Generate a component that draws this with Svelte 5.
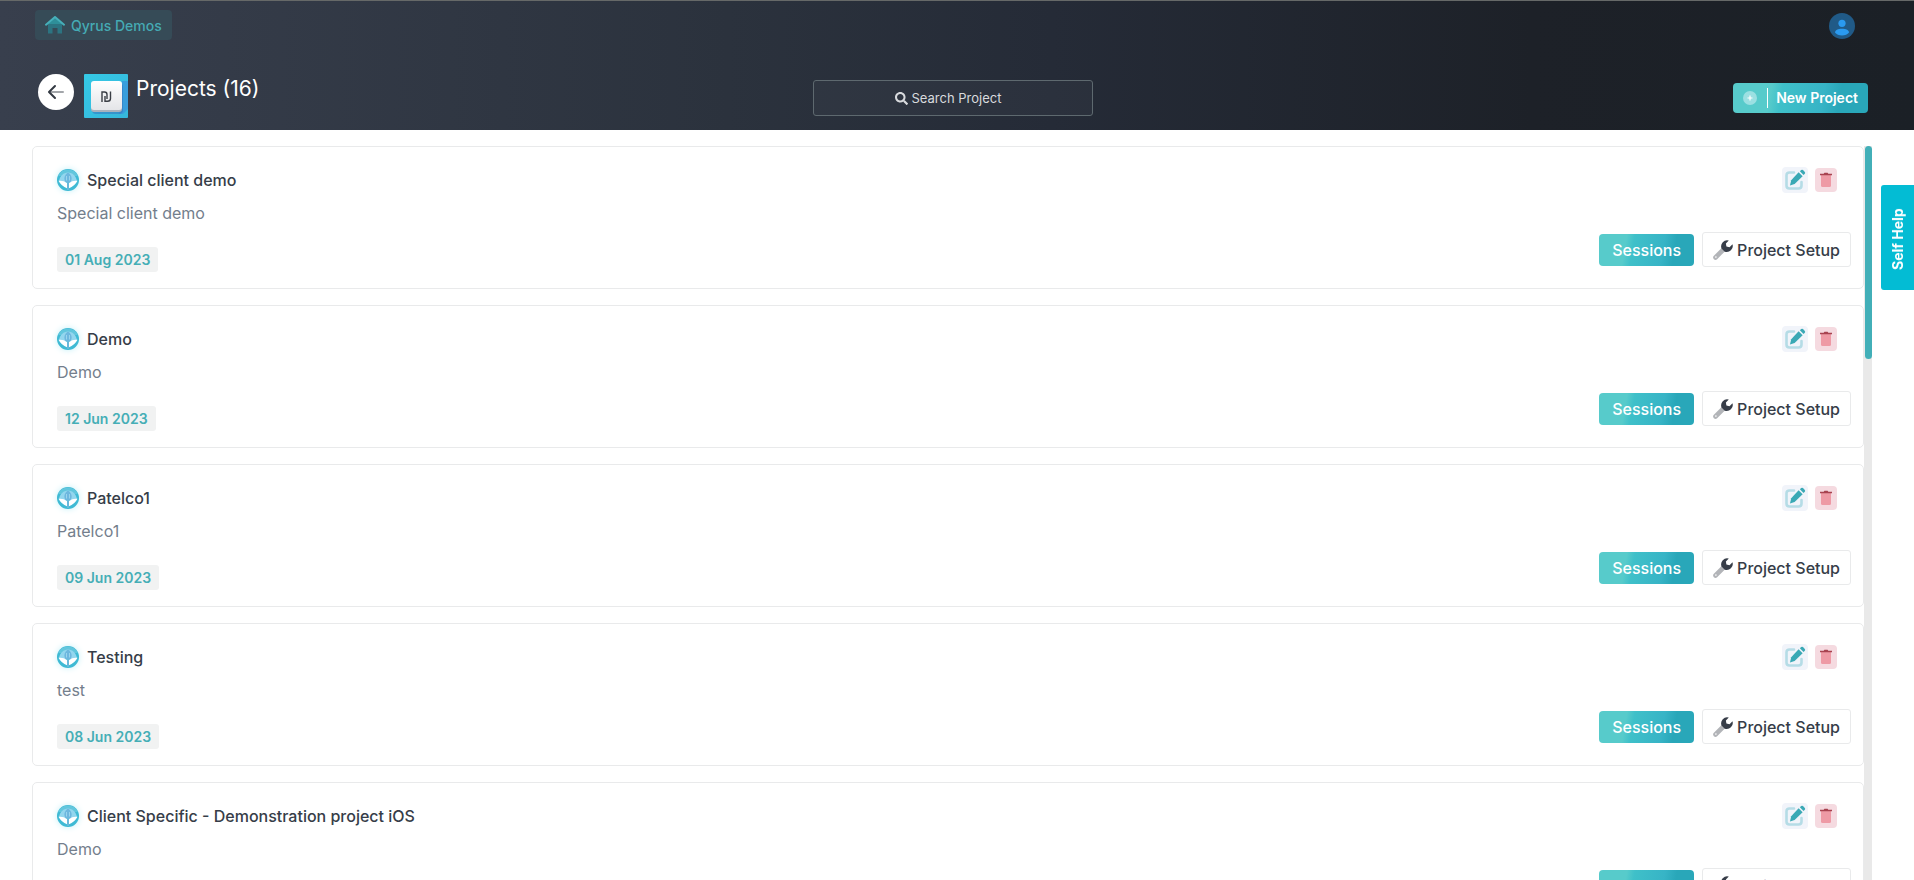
<script>
  const total = 16;
  const visibleShare = 29;
  const projects = [
    { name: 'Special client demo', description: 'Special client demo', date: '01 Aug 2023' },
    { name: 'Demo', description: 'Demo', date: '12 Jun 2023' },
    { name: 'Patelco1', description: 'Patelco1', date: '09 Jun 2023' },
    { name: 'Testing', description: 'test', date: '08 Jun 2023' },
    { name: 'Client Specific - Demonstration project iOS', description: 'Demo', date: '' }
  ];
</script>

<div class="page">
  <header>
    <div class="topbar">
      <a class="crumb" href="#home">
        <svg width="20" height="18" viewBox="0 0 20 18" aria-hidden="true">
          <path d="M3 8v9.500h4.500v-5.500h5v5.500h4.500v-9.500l-7-5.500z" fill="#2c7481" />
          <path d="M10 1.500L2.800 8h14.400z" fill="#2e8f99" />
          <path d="M1 8.700L10 1l9 7.700" fill="none" stroke="#46b0ba" stroke-width="2" stroke-linejoin="round" stroke-linecap="round" />
        </svg>
        Qyrus Demos
      </a>
      <button class="avatar" aria-label="Account">
        <svg width="26" height="26" viewBox="0 0 26 26" aria-hidden="true">
          <circle cx="13" cy="13" r="13" fill="#205a87" />
          <circle cx="13" cy="10.300" r="3.600" fill="#2a9af0" />
          <path d="M6 19.500c0-2.200 3-3.700 7-3.700s7 1.500 7 3.700c-1.500 2-4 3-7 3s-5.500-1-7-3z" fill="#2a9af0" />
        </svg>
      </button>
    </div>

    <div class="toolbar">
      <div class="heading">
        <button class="back" aria-label="Back">
          <svg width="18" height="16" viewBox="0 0 18 16" aria-hidden="true">
            <path d="M3 8h13" stroke="#a3a6aa" stroke-width="2" stroke-linecap="round" />
            <path d="M8 2L2 8l6 6" fill="none" stroke="#343a43" stroke-width="2" stroke-linecap="round" stroke-linejoin="round" />
          </svg>
        </button>
        <svg class="logo" width="44" height="44" viewBox="0 0 44 44" aria-hidden="true">
          <defs>
            <linearGradient id="tile" x1="0" y1="0" x2="1" y2="1">
              <stop offset="0" stop-color="#35c9e6" />
              <stop offset="1" stop-color="#36b6da" />
            </linearGradient>
            <linearGradient id="key" x1="0" y1="0" x2="0" y2="1">
              <stop offset="0" stop-color="#ffffff" />
              <stop offset="1" stop-color="#e4e5e8" />
            </linearGradient>
          </defs>
          <rect width="44" height="44" rx="1" fill="url(#tile)" />
          <path d="M38 7h6v28l-5 5h-4z" fill="#3a92dc" opacity=".7" />
          <rect x="8" y="9" width="31" height="31" rx="4" fill="#3474bd" opacity=".55" />
          <rect x="7" y="8" width="31" height="30" rx="3" fill="#a8b2bd" />
          <rect x="7" y="7" width="31" height="29" rx="3" fill="url(#key)" />
          <path d="M18 28V18h2.500q2.500 0 2.500 2.500V25M21 22v5.300h2.500q3 0 3-2.800V17.500" fill="none" stroke="#3a3e45" stroke-width="1.400" />
        </svg>
        <h1>Projects ({total})</h1>
      </div>

      <button class="search">
        <svg width="13" height="13" viewBox="0 0 512 512" aria-hidden="true">
          <path fill="#d8dadd" d="M505 442.700L405.300 343c-4.500-4.500-10.600-7-17-7H372c27.600-35.300 44-79.700 44-128C416 93.100 322.900 0 208 0S0 93.100 0 208s93.100 208 208 208c48.300 0 92.700-16.400 128-44v16.300c0 6.400 2.500 12.500 7 17l99.700 99.700c9.400 9.400 24.600 9.400 33.900 0l28.300-28.300c9.400-9.400 9.400-24.600.1-34zM208 336c-70.700 0-128-57.200-128-128 0-70.700 57.200-128 128-128 70.700 0 128 57.200 128 128 0 70.700-57.200 128-128 128z" />
        </svg>
        Search Project
      </button>

      <button class="new">
        <svg width="14" height="14" viewBox="0 0 14 14" aria-hidden="true">
          <circle cx="7" cy="7" r="7" fill="#9be0e2" />
          <path d="M7 4.500v5M4.500 7h5" stroke="#fff" stroke-width="1.200" />
        </svg>
        <span class="divider"></span>
        New Project
      </button>
    </div>
  </header>

  <main>
    <ul>
      {#each projects as project}
        <li>
          <div class="info">
            <h2>
              <svg class="badge" width="22" height="22" viewBox="0 0 22 22" aria-hidden="true">
                <circle cx="11" cy="11" r="11" fill="#3fbad4" />
                <path d="M1 7A11 11 0 0 1 21 7z" fill="#62c6dd" />
                <path d="M2 12C3 7 6.500 3.500 11 3.500S19 7 20 12q-5 2-9 1-4 1-9-1z" fill="#93d6ee" />
                <path d="M11 3.500c-4 2.500-4.500 7-2.500 9.500h5c2-2.500 1.500-7-2.500-9.500z" fill="#6db7de" />
                <path d="M9.500 7v4.500M12.500 7v4.500" stroke="#a5dcf1" stroke-width=".8" />
                <path d="M1.500 11.800Q6 11 10 14v5.200Q4.500 17.500 1.500 11.800zM20.500 11.800Q16 11 12 14v5.200Q17.500 17.500 20.500 11.800z" fill="#fff" />
                <path d="M11 13v8" stroke="#74b8dc" stroke-width="1.600" />
              </svg>
              {project.name}
            </h2>
            <p>{project.description}</p>
            {#if project.date}
              <time>{project.date}</time>
            {/if}
          </div>

          <div class="side">
            <div class="tools">
              <button class="edit" aria-label="Edit {project.name}">
                <svg width="22" height="22" viewBox="0 0 22 22" aria-hidden="true">
                  <path d="M10 3.500H5.500Q2.500 3.500 2.500 6.500V16.500Q2.500 19.500 5.500 19.500H14.500Q17.500 19.500 17.500 16.500V13" fill="none" stroke="#b5dce6" stroke-width="2.600" stroke-linecap="round" />
                  <path d="M14.600 3.200L18.600 7.200 10.600 15 6 16.400 7.200 11.300z" fill="#3aa9b5" />
                  <path d="M15.900 2.300L17.200 1Q18.100.3 19 1.100L20.800 2.900Q21.600 3.800 20.800 4.700L19.500 6z" fill="#3aa9b5" />
                </svg>
              </button>
              <button class="delete" aria-label="Delete {project.name}">
                <svg width="12" height="16" viewBox="0 0 12 16" aria-hidden="true">
                  <path d="M1 3h10v10.500q0 1.500-1.500 1.500h-7Q1 15 1 13.500z" fill="#ee9aa5" />
                  <path d="M0 1.700h3.700L4.400.7h3.200l.7 1H12v1.600H0z" fill="#a84350" />
                </svg>
              </button>
            </div>
            <div class="actions">
              <button class="sessions">Sessions</button>
              <button class="setup">
                <svg width="20" height="20" viewBox="0 0 20 20" aria-hidden="true">
                  <path d="M11.500 8.500L2.500 17.500" stroke="#b2b4b8" stroke-width="4.600" stroke-linecap="round" />
                  <circle cx="2.900" cy="17.100" r=".8" fill="#fff" />
                  <path d="M15.800.6A6 6 0 0 0 8.500 8.400L11.800 11.700A6 6 0 0 0 19.500 4.300L16.500 7.200 13.400 6.600 12.900 3.500z" fill="#373d48" />
                </svg>
                Project Setup
              </button>
            </div>
          </div>
        </li>
      {/each}
    </ul>
    <div class="track"><div class="thumb" style="height: {visibleShare}%"></div></div>
  </main>

  <button class="help">Self Help</button>
</div>

<style>
  :global(body) {
    background: #fff;
  }

  .page {
    height: 100vh;
    display: flex;
    flex-direction: column;
    overflow: hidden;
    font-family: Inter, 'Liberation Sans', sans-serif;
    font-size: 16px;
    line-height: 20px;
    color: #363d48;
  }

  .page :global(*) {
    box-sizing: border-box;
  }

  button {
    font: inherit;
    color: inherit;
    border: 0;
    padding: 0;
    background: none;
    cursor: pointer;
    display: flex;
    align-items: center;
    justify-content: center;
    white-space: nowrap;
  }

  svg {
    display: block;
    flex: none;
  }

  header {
    border-top: 1px solid #666968;
    padding: 9px 46px 12px 35px;
    background: linear-gradient(90deg, #383f4d, #2b323d 38%, #252b37 55%, #1d2128 80%, #1b2026);
  }

  .topbar {
    display: flex;
    justify-content: space-between;
    padding-right: 13px;
    margin-bottom: 34px;
  }

  .avatar {
    padding-top: 2px;
  }

  .crumb {
    height: 30px;
    display: flex;
    align-items: center;
    gap: 6px;
    padding: 2px 10px 0;
    border-radius: 4px;
    background: #364b57;
    color: #45aab4;
    font-size: 14px;
    font-weight: 500;
    text-decoration: none;
  }

  .crumb svg {
    margin-bottom: 2px;
  }

  .toolbar {
    display: grid;
    grid-template-columns: 1fr 280px 1fr;
    align-items: center;
    padding-left: 3px;
  }

  .heading {
    display: flex;
    align-items: flex-start;
  }

  .back {
    width: 36px;
    height: 36px;
    border-radius: 50%;
    background: #fff;
  }

  .logo {
    margin: 0 8px 0 10px;
  }

  h1 {
    margin: 0;
    font-size: 21px;
    line-height: 30px;
    font-weight: 400;
    color: #fff;
  }

  .search {
    height: 36px;
    margin-top: 4px;
    padding-right: 10px;
    gap: 4px;
    border: 1px solid #5e696f;
    border-radius: 3px;
    background: rgba(255, 255, 255, 0.03);
    color: #d8dadd;
    font-size: 13px;
    font-weight: 400;
  }

  .new {
    justify-self: end;
    height: 30px;
    margin-top: 4px;
    padding: 0 10px;
    border-radius: 4px;
    font-size: 14px;
    font-weight: 600;
  }

  .new,
  .sessions {
    color: #fff;
    background: linear-gradient(100deg, #57cbcb 28%, #3fc0c9 36%, #37b4c6 66%, #29a7b9 78%);
  }

  .divider {
    width: 1px;
    height: 20px;
    margin: 0 8px 0 10px;
    background: #fff;
  }

  main {
    flex: 1;
    min-height: 0;
    display: flex;
    padding: 16px 42px 0 32px;
  }

  ul {
    flex: 1;
    margin: 0;
    padding: 0;
    list-style: none;
    display: flex;
    flex-direction: column;
    gap: 16px;
    overflow: hidden;
  }

  li {
    flex: none;
    min-height: 143px;
    display: flex;
    justify-content: space-between;
    padding: 20px 12px 16px 24px;
    border: 1px solid #e9eaeb;
    border-radius: 5px;
  }

  .info {
    display: flex;
    flex-direction: column;
    align-items: flex-start;
  }

  h2 {
    display: flex;
    align-items: center;
    gap: 8px;
    height: 26px;
    margin: 0 0 10px;
    font-size: 16px;
    font-weight: 500;
  }

  .badge {
    filter: drop-shadow(0 0 3px #c4f1f8);
  }

  p {
    margin: 0 0 24px;
    color: #737e8c;
  }

  time {
    padding: 0 8px;
    border-radius: 3px;
    background: #f1f2f2;
    color: #45aeb6;
    font-size: 14px;
    line-height: 25px;
    font-weight: 600;
  }

  .side {
    display: flex;
    flex-direction: column;
    align-items: flex-end;
    justify-content: space-between;
    padding-bottom: 5px;
  }

  .tools {
    display: flex;
    align-items: center;
    gap: 7px;
    padding-right: 14px;
  }

  .edit {
    width: 26px;
    height: 26px;
    border-radius: 4px;
    background: #f1f4fa;
  }

  .delete {
    width: 22px;
    height: 24px;
    border-radius: 4px;
    background: #f5dae0;
  }

  .actions {
    display: flex;
    align-items: center;
    gap: 8px;
    font-weight: 500;
  }

  .sessions {
    height: 32px;
    padding: 0 13px;
    border-radius: 4px;
  }

  .setup {
    height: 35px;
    gap: 4px;
    padding: 0 10px;
    border: 1px solid #e9eaeb;
    border-radius: 3px;
  }

  .track {
    width: 8px;
    padding-left: 1px;
    background: #e9e9e9;
  }

  .thumb {
    border-radius: 4px;
    background: #42afb8;
  }

  .help {
    position: fixed;
    top: 185px;
    right: 0;
    width: 33px;
    height: 105px;
    padding: 0 2px 4px 0;
    border-radius: 0 3px 3px 0;
    background: #03bcd4;
    color: #fff;
    font-size: 14px;
    font-weight: 700;
    writing-mode: vertical-rl;
    transform: rotate(180deg);
  }
</style>
